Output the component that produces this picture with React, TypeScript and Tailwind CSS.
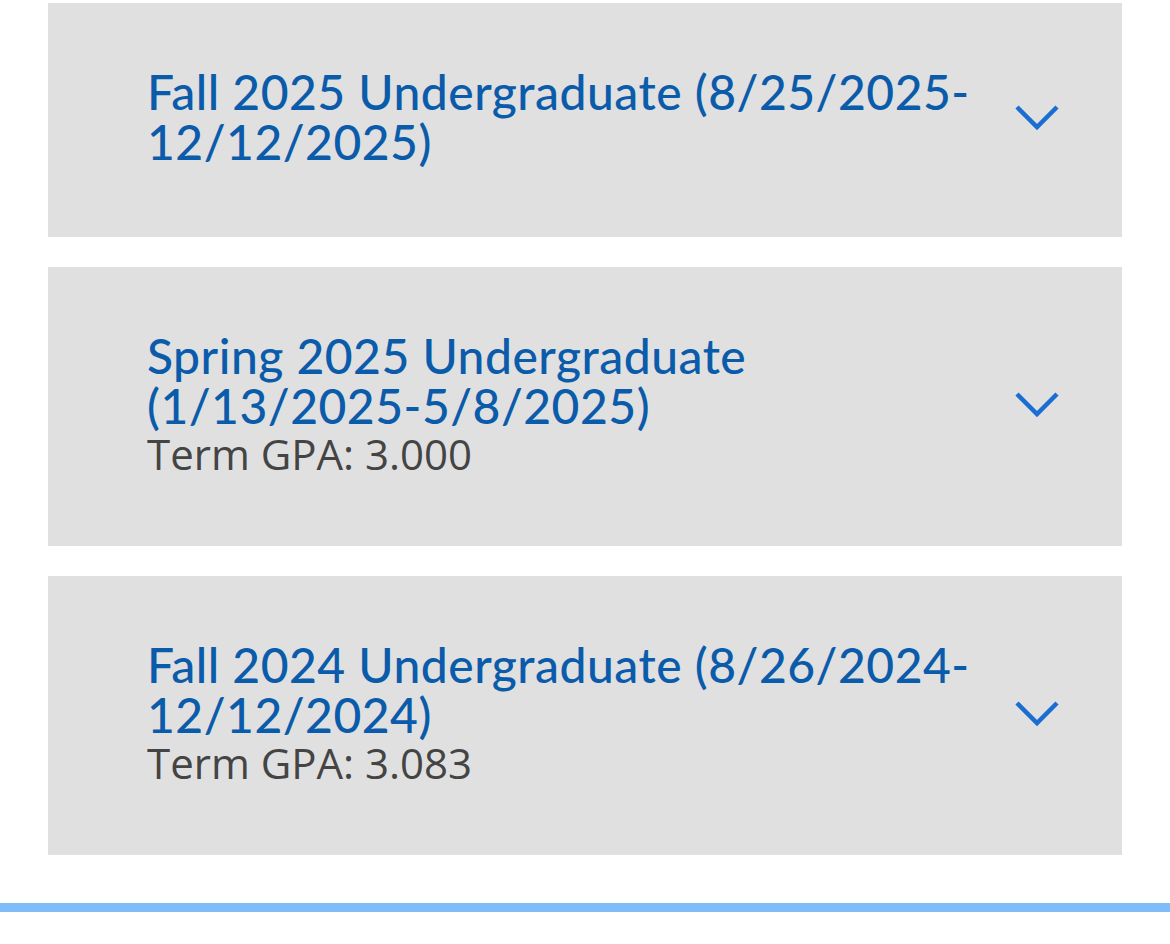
const terms = [
  { title: "Fall 2025 Undergraduate (8/25/2025-12/12/2025)", gpa: null },
  { title: "Spring 2025 Undergraduate (1/13/2025-5/8/2025)", gpa: "3.000" },
  { title: "Fall 2024 Undergraduate (8/26/2024-12/12/2024)", gpa: "3.083" },
];

function Chevron() {
  return (
    <svg width="44" height="28" viewBox="0 0 44 28" fill="none" className="shrink-0">
      <polyline points="2,4 22,24 42,4" stroke="#1a6ed2" strokeWidth="4.5" strokeLinejoin="miter" />
    </svg>
  );
}

function TermCard({ title, gpa }: { title: string; gpa: string | null }) {
  return (
    <div className="flex items-center bg-[#e0e0e0] pl-[99px] pr-[63px] pt-[64px] pb-[70px]">
      <div className="flex-1 pr-[26px]">
        <p className="text-[48px] leading-[50px] tracking-[0.5px] font-medium text-[#0b5bab] font-['Lato','Noto_Sans',sans-serif]">
          {title}
        </p>
        {gpa && (
          <p className="text-[42px] leading-[45px] text-[#444444] font-['Open_Sans',sans-serif]">Term GPA: {gpa}</p>
        )}
      </div>
      <Chevron />
    </div>
  );
}

export default function App() {
  return (
    <div className="w-[1170px] h-[944px] bg-white overflow-hidden flex flex-col">
      <div className="flex flex-col gap-[30px] px-[48px] pt-[3px]">
        {terms.map((t) => (
          <TermCard key={t.title} title={t.title} gpa={t.gpa} />
        ))}
      </div>
      <div className="mt-[48px] h-[9px] bg-[#80bdf8]" />
    </div>
  );
}
